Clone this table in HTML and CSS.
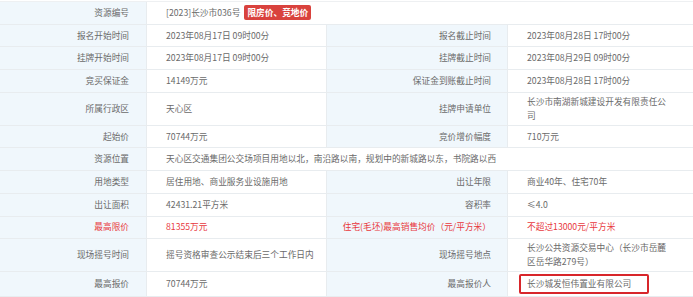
FILE: index.html
```html
<!DOCTYPE html>
<html lang="zh-CN">
<head>
<meta charset="utf-8">
<link rel="stylesheet" href="styles.css">
</head>
<body>
<div class="info">
  <div class="lbl">资源编号</div>
  <div class="val span3">[2023]长沙市036号<span class="badge">限房价、竞地价</span></div>

  <div class="lbl">报名开始时间</div>
  <div class="val">2023年08月17日 09时00分</div>
  <div class="lbl lbl2">报名截止时间</div>
  <div class="val val2">2023年08月28日 17时00分</div>

  <div class="lbl">挂牌开始时间</div>
  <div class="val">2023年08月17日 09时00分</div>
  <div class="lbl lbl2">挂牌截止时间</div>
  <div class="val val2">2023年08月29日 09时00分</div>

  <div class="lbl">竞买保证金</div>
  <div class="val">14149万元</div>
  <div class="lbl lbl2">保证金到账截止时间</div>
  <div class="val val2">2023年08月28日 17时00分</div>

  <div class="lbl">所属行政区</div>
  <div class="val">天心区</div>
  <div class="lbl lbl2">挂牌申请单位</div>
  <div class="val val2">长沙市南湖新城建设开发有限责任公司</div>

  <div class="lbl">起始价</div>
  <div class="val">70744万元</div>
  <div class="lbl lbl2">竞价增价幅度</div>
  <div class="val val2">710万元</div>

  <div class="lbl">资源位置</div>
  <div class="val span3">天心区交通集团公交场项目用地以北，南沿路以南，规划中的新城路以东，书院路以西</div>

  <div class="lbl">用地类型</div>
  <div class="val">居住用地、商业服务业设施用地</div>
  <div class="lbl lbl2">出让年限</div>
  <div class="val val2">商业40年、住宅70年</div>

  <div class="lbl">出让面积</div>
  <div class="val">42431.21平方米</div>
  <div class="lbl lbl2">容积率</div>
  <div class="val val2">≤4.0</div>

  <div class="lbl red">最高限价</div>
  <div class="val red">81355万元</div>
  <div class="lbl lbl2 red">住宅(毛坯)最高销售均价（元/平方米）</div>
  <div class="val val2 red">不超过13000元/平方米</div>

  <div class="lbl">现场摇号时间</div>
  <div class="val">摇号资格审查公示结束后三个工作日内</div>
  <div class="lbl lbl2">现场摇号地点</div>
  <div class="val val2">长沙公共资源交易中心（长沙市岳麓区岳华路279号）</div>

  <div class="lbl">最高报价</div>
  <div class="val">70744万元</div>
  <div class="lbl lbl2">最高报价人</div>
  <div class="val val2"><span class="mark">长沙城发恒伟置业有限公司</span></div>

  <div class="lbl"></div>
  <div class="val"></div>
  <div class="lbl lbl2"></div>
  <div class="val val2"></div>
</div>
</body>
</html>
```

FILE: styles.css
```css
html, body {
  margin: 0;
  padding: 0;
  background: #ffffff;
}
body {
  font-family: "Noto Sans CJK SC", "Noto Sans", sans-serif;
  font-size: 8.7px;
  color: #6a6a6a;
  overflow: hidden;
}
.info {
  margin-top: 1px;
  display: grid;
  grid-template-columns: 147px 180px 181px 185px;
  grid-auto-rows: minmax(22.7px, auto);
  border-top: 1px solid #eef0f2;
  width: 693px;
}
.lbl, .val {
  display: flex;
  align-items: center;
  line-height: 14px;
  padding: 2px 0;
  border-bottom: 1px solid #e8ecef;
  border-right: 1px solid #e8ecef;
  box-sizing: border-box;
}
.lbl {
  background: #f0f7fc;
  justify-content: flex-end;
  text-align: right;
  padding-right: 17px;
}
.lbl2 {
  padding-right: 16px;
}
.val {
  background: #ffffff;
  padding-left: 19px;
  padding-right: 10px;
}
.val2 {
  padding-right: 24px;
  border-right: none;
}
.span3 {
  grid-column: span 3;
  border-right: none;
}
.red {
  color: #e8383d;
}
.badge {
  display: inline-block;
  margin-left: 4px;
  padding: 0 3px;
  height: 15px;
  line-height: 15px;
  background: #d9423d;
  color: #ffffff;
  font-weight: bold;
  border-radius: 2px;
}
.mark {
  display: inline-block;
  margin-left: -8px;
  padding: 2px 16px 2px 6px;
  border: 2px solid #d8262b;
  border-radius: 2px;
  line-height: 12px;
}
```
